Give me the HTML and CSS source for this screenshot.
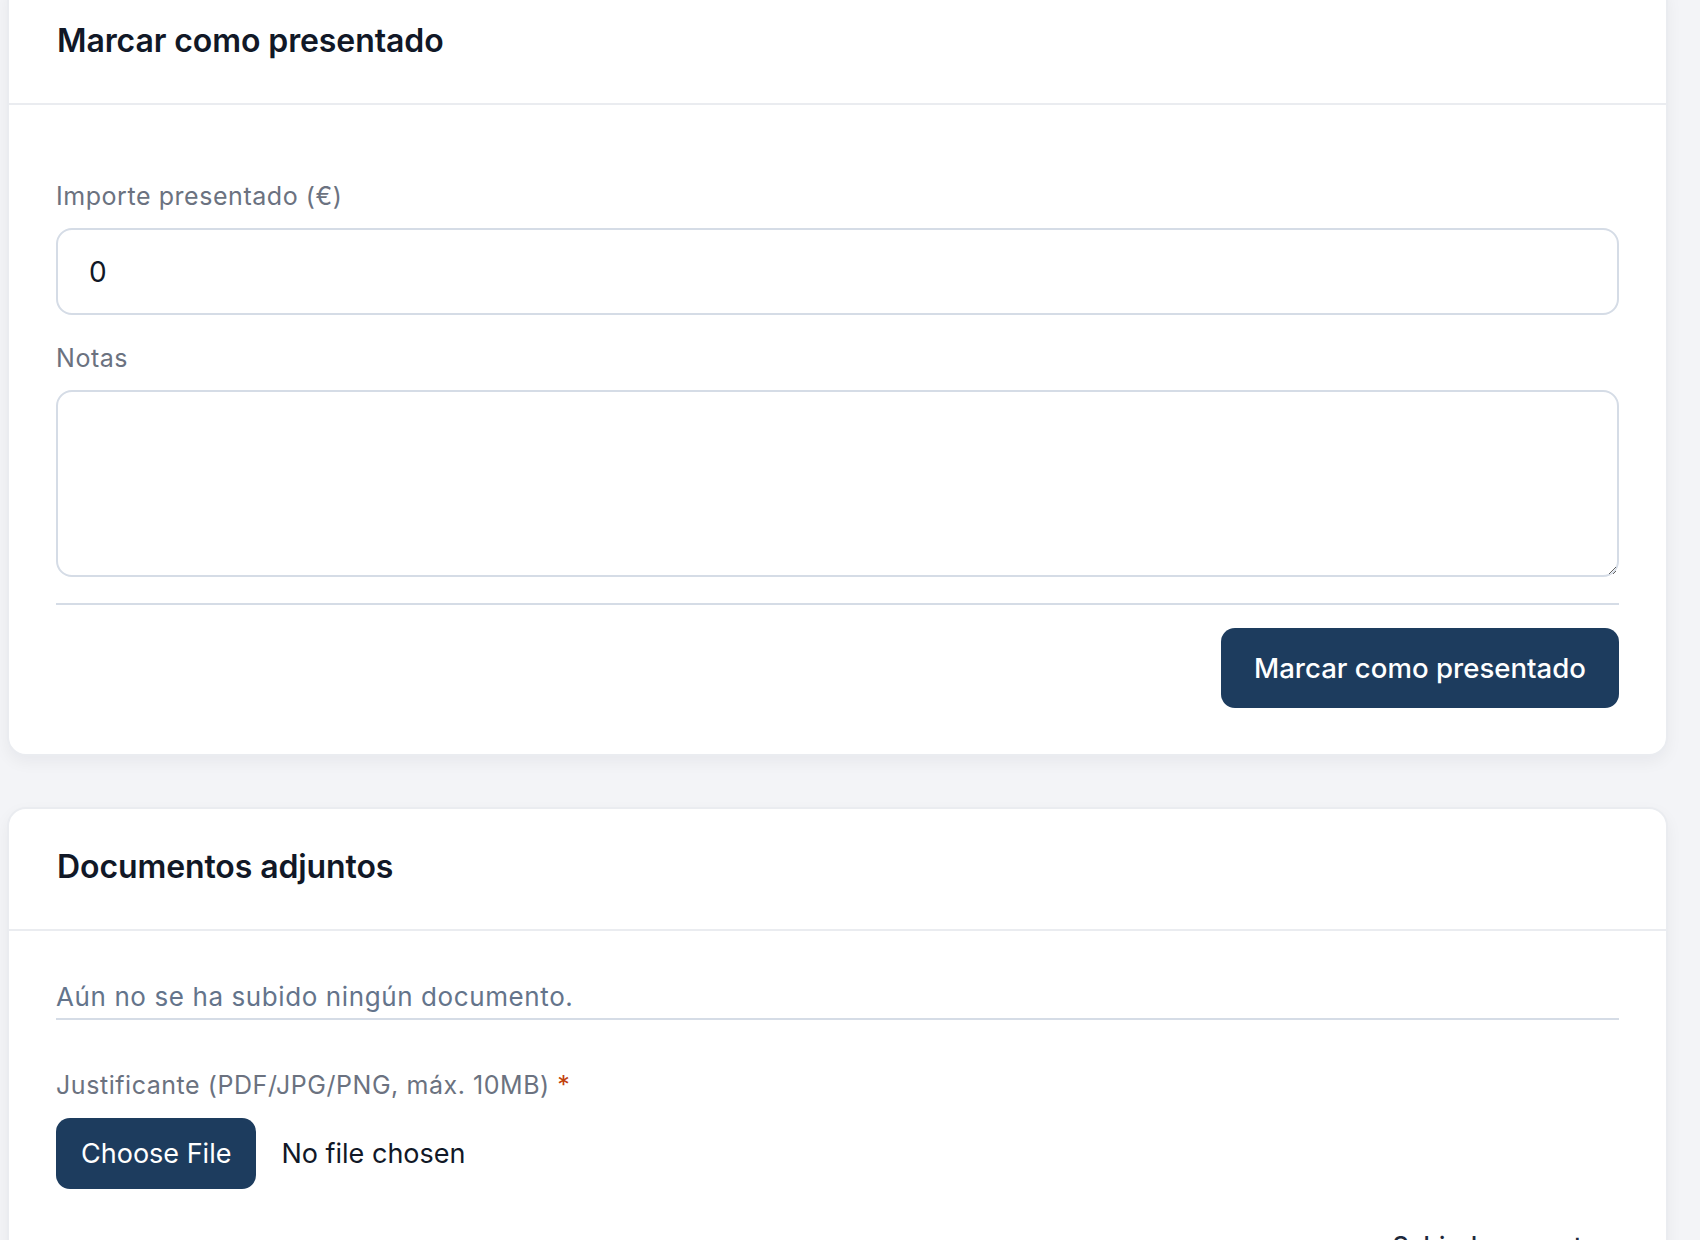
FILE: index.html
```html
<!DOCTYPE html>
<html lang="es">
<head>
<meta charset="utf-8">
<title>Presentación</title>
<link rel="stylesheet" href="styles.css">
</head>
<body>
<main class="page">
  <section class="card card-first">
    <header class="card-header">
      <h2 class="card-title">Marcar como presentado</h2>
    </header>
    <form class="card-body present-form">
      <label class="field-label" for="importe">Importe presentado (€)</label>
      <input id="importe" class="text-input" type="text" value="0">
      <label class="field-label notes-label" for="notas">Notas</label>
      <textarea id="notas" class="text-area"></textarea>
      <div class="form-actions">
        <button type="button" class="btn-primary">Marcar como presentado</button>
      </div>
    </form>
  </section>

  <section class="card">
    <header class="card-header">
      <h2 class="card-title">Documentos adjuntos</h2>
    </header>
    <div class="card-body docs-body">
      <p class="empty-note">Aún no se ha subido ningún documento.</p>
      <form class="upload-form">
        <label class="field-label upload-label" for="justificante">Justificante (PDF/JPG/PNG, máx. 10MB) <span class="required">*</span></label>
        <input id="justificante" class="file-input" type="file" accept=".pdf,.jpg,.png">
        <div class="upload-actions">
          <button type="button" class="btn-plain">Subir documento</button>
        </div>
      </form>
    </div>
  </section>
</main>
</body>
</html>
```

FILE: styles.css
```css
* {
  box-sizing: border-box;
}

html,
body {
  margin: 0;
  background: #f3f4f7;
}

body {
  font-family: "Inter", "Liberation Sans", sans-serif;
  color: #111827;
  overflow: hidden;
}

.page {
  padding: 0 32px 0 7px;
  display: flex;
  flex-direction: column;
  gap: 51px;
}

.card {
  background: #ffffff;
  border: 2px solid #eaecf0;
  border-radius: 19px;
  box-shadow: 0 6px 16px rgba(15, 23, 42, 0.05);
}

.card-first {
  margin-top: -19px;
}

.card-header {
  padding: 38px 48px 42px;
  border-bottom: 2px solid #eaecf0;
}

.card-title {
  margin: 0;
  font-size: 32px;
  line-height: 40px;
  font-weight: 600;
  color: #111827;
  letter-spacing: -0.1px;
}

.card-body {
  padding: 73px 47px 46px 47px;
}

.present-form {
  display: flex;
  flex-direction: column;
}

.field-label {
  display: block;
  font-size: 25px;
  line-height: 36px;
  letter-spacing: 0.55px;
  color: #6b7280;
  margin-bottom: 14px;
}

.notes-label {
  margin-top: 25px;
}

.text-input,
.text-area {
  display: block;
  width: 100%;
  border: 2px solid #d5dce6;
  border-radius: 16px;
  background: #ffffff;
  font-family: inherit;
  color: #111827;
  outline: none;
}

.text-input {
  height: 87px;
  padding: 0 31px;
  font-size: 28px;
}

.text-area {
  height: 187px;
  padding: 20px 31px;
  font-size: 28px;
  resize: vertical;
}

.form-actions {
  margin-top: 26px;
  padding-top: 23px;
  border-top: 2px solid #d5dce6;
  display: flex;
  justify-content: flex-end;
}

.btn-primary {
  height: 80px;
  padding: 0 33px;
  border: none;
  border-radius: 14px;
  background: #1d3c5e;
  color: #ffffff;
  font-family: inherit;
  font-size: 27.6px;
  font-weight: 500;
  cursor: pointer;
}

.docs-body {
  padding-top: 47px;
  padding-bottom: 0;
}

.empty-note {
  margin: 0;
  padding-bottom: 2px;
  font-size: 26px;
  line-height: 38px;
  letter-spacing: 0.6px;
  color: #64748b;
  border-bottom: 2px solid #d5dce6;
}

.upload-form {
  display: flex;
  flex-direction: column;
  align-items: flex-start;
}

.upload-label {
  margin-top: 47px;
  margin-bottom: 15px;
}

.required {
  color: #c2410c;
}

.file-input {
  font-family: inherit;
  font-size: 27px;
  color: #111827;
  height: 71px;
}

.file-input::file-selector-button {
  height: 71px;
  margin-right: 25px;
  padding: 0 25px;
  border: none;
  border-radius: 14px;
  background: #1d3c5e;
  color: #ffffff;
  font-family: inherit;
  font-size: 27px;
  cursor: pointer;
}

.upload-actions {
  align-self: stretch;
  margin-top: 17px;
  display: flex;
  justify-content: flex-end;
}

.btn-plain {
  height: 80px;
  padding: 0 22px;
  border: none;
  background: transparent;
  color: #1e293b;
  font-family: inherit;
  font-size: 25px;
  font-weight: 500;
}
```
